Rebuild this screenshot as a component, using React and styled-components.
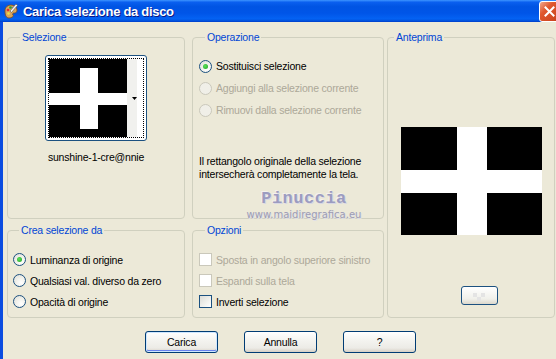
import React from 'react'
import styled, { createGlobalStyle } from 'styled-components'

const GlobalStyle = createGlobalStyle`
  html, body {
    margin: 0;
    padding: 0;
    background: #ECE9D8;
  }
  body {
    font-family: "Liberation Sans", Arial, sans-serif;
    font-size: 10.5px;
    letter-spacing: -0.2px;
    color: #000;
  }
`

const Window = styled.div`
  width: 556px;
  height: 359px;
  display: flex;
  flex-direction: column;
  overflow: hidden;
  background: #ECE9D8;
`

const TitleBar = styled.div`
  height: 22px;
  flex: none;
  display: flex;
  align-items: center;
  padding-left: 3px;
  background: linear-gradient(to bottom, #3D95FF 0%, #0A5FEF 10%, #0054E3 30%, #0055E8 60%, #0462F3 85%, #0051DC 95%, #003BC7 100%);
  overflow: hidden;
`

const TitleText = styled.span`
  flex: 1;
  margin-left: 4px;
  color: #fff;
  font-family: "Liberation Sans", Arial, sans-serif;
  font-weight: bold;
  font-size: 13px;
  letter-spacing: -0.3px;
  text-shadow: 1px 1px 0 #0A1883;
`

const CloseBtn = styled.div`
  width: 21px;
  height: 21px;
  margin-right: -4px;
  border: 1px solid #fff;
  border-radius: 3px;
  box-sizing: border-box;
  background: linear-gradient(135deg, #F0A98E 0%, #E0582E 35%, #C8401B 100%);
  display: flex;
  align-items: center;
  justify-content: center;
`

const Frame = styled.div`
  flex: 1;
  border-left: 3px solid #0B4CE0;
  padding: 9px 2px 0 4px;
  display: flex;
  flex-direction: column;
  position: relative;
`

const Grid = styled.div`
  display: grid;
  grid-template-columns: 178px 7px 192px 3px 168px;
  grid-template-rows: 188px 94px;
  row-gap: 5px;
`

const Group = styled.fieldset`
  margin: 0;
  padding: ${p => p.$pad || '0 6px'};
  border: 1px solid #D0D0BF;
  border-radius: 4px;
  min-width: 0;
  box-sizing: border-box;
  grid-column: ${p => p.$col || 'auto'};
  grid-row: ${p => p.$rows || 'auto'};
  display: flex;
  flex-direction: column;
  align-items: ${p => p.$align || 'stretch'};
`

const Legend = styled.legend`
  color: #0046D5;
  padding: 0 2px;
  margin-left: 6px;
  line-height: 13px;
`

const Thumb = styled.div`
  width: 102px;
  height: 86px;
  box-sizing: border-box;
  margin-top: 11px;
  border: 1px solid #1C5180;
  border-radius: 3px;
  background: #fff;
  padding: 2px;
  position: relative;
  display: flex;
`

const ThumbInner = styled.div`
  flex: 1;
  border: 1px dotted #000;
  display: flex;
  align-items: stretch;
`

const ThumbStrip = styled.div`
  width: 10px;
  background: #F1F1EE;
  display: flex;
  align-items: center;
  justify-content: flex-end;
`

const ThumbLabel = styled.div`
  margin-top: 10px;
  text-align: center;
`

const Option = styled.label`
  display: flex;
  align-items: center;
  gap: 4px;
  white-space: nowrap;
  height: ${p => p.$h || 22}px;
  color: ${p => (p.$disabled ? '#ACA899' : '#000')};
`

const Radio = styled.span`
  width: 13px;
  height: 13px;
  box-sizing: border-box;
  border-radius: 50%;
  border: 1px solid ${p => (p.$disabled ? '#CAC8BB' : '#1C5180')};
  background: ${p => (p.$disabled
    ? '#F0EFE8'
    : 'radial-gradient(circle at 65% 70%, #fff 0%, #F3F3EE 40%, #DCDCD4 100%)')};
  display: flex;
  align-items: center;
  justify-content: center;
  flex: none;
  &::after {
    content: '';
    display: ${p => (p.$checked ? 'block' : 'none')};
    width: 5px;
    height: 5px;
    border-radius: 50%;
    background: radial-gradient(circle at 40% 40%, #5BE25B, #21A121);
  }
`

const Check = styled.span`
  width: 13px;
  height: 13px;
  box-sizing: border-box;
  border: 1px solid ${p => (p.$disabled ? '#CAC8BB' : '#1C5180')};
  background: ${p => (p.$disabled
    ? '#fff'
    : 'linear-gradient(135deg, #DCDCD7 0%, #F2F2EE 60%, #fff 100%)')};
  flex: none;
`

const Note = styled.p`
  margin: 34px 0 0;
  line-height: 13px;
  white-space: nowrap;
`

const PreviewBox = styled.div`
  flex: 1;
  display: flex;
  flex-direction: column;
  align-items: center;
  padding-top: 83px;
`

const SmallBtn = styled.div`
  margin: 51px 0 0 16px;
  width: 37px;
  height: 19px;
  box-sizing: border-box;
  border: 1px solid #1C5180;
  border-radius: 3px;
  background: linear-gradient(to bottom, #fff, #F0F0EA 70%, #DCD8CC);
  display: flex;
  align-items: center;
  justify-content: center;
`

const ButtonRow = styled.div`
  display: flex;
  justify-content: center;
  gap: 26px;
  margin-top: 13px;
`

const Button = styled.div`
  width: 73px;
  height: 22px;
  box-sizing: border-box;
  border: 1px solid #003C74;
  border-radius: 3px;
  background: linear-gradient(to bottom, #FFFFFF 0%, #F4F4F0 40%, #ECEBE6 80%, #D6D0C5 100%);
  display: flex;
  align-items: center;
  justify-content: center;
  box-shadow: ${p => (p.$default ? 'inset 0 0 0 1px #CEE7FF, inset 0 -1px 0 1px #6982EE' : 'none')};
`

const Watermark = styled.div`
  position: absolute;
  left: 239px;
  top: 167px;
  width: 124px;
  text-align: center;
  pointer-events: none;
  letter-spacing: 0;
`

const WmName = styled.div`
  font-family: "Liberation Mono", monospace;
  font-weight: bold;
  font-size: 17px;
  letter-spacing: 0.5px;
  color: #9C9CC0;
  text-shadow: 1px 1px 0 #D8D8E4, -1px -1px 0 #F4F2EE;
`

const WmUrl = styled.div`
  font-family: "DejaVu Sans", sans-serif;
  font-size: 10px;
  color: #9C9CB4;
  margin-top: 1px;
  text-shadow: 1px 1px 0 #E0E0E8;
`

function AppIcon() {
  return (
    <svg width="16" height="16" viewBox="0 0 16 16">
      <path d="M2 8c0-4 3-6 6-6s6 2 6 5-2 3-3 3-2 1-1 2-1 3-4 3S2 12 2 8z" fill="#D9A45A" stroke="#7A4A1A" strokeWidth="0.8" />
      <circle cx="5" cy="7" r="1.3" fill="#E23030" />
      <circle cx="7.5" cy="4.5" r="1.3" fill="#30A030" />
      <circle cx="10.5" cy="5" r="1.3" fill="#2F5FE0" />
      <circle cx="5.5" cy="10.5" r="1.3" fill="#F0E040" />
      <path d="M13 1l1.5 1.5-6 7-1.5-1.5z" fill="#F3F3F3" stroke="#555" strokeWidth="0.6" />
    </svg>
  )
}

function Cross({ w, h, vx, vw, vy, vh, hy, hh }) {
  return (
    <svg width={w} height={h} viewBox={`0 0 ${w} ${h}`} style={{ display: 'block' }}>
      <rect width={w} height={h} fill="#000" />
      <rect x={vx} y={vy} width={vw} height={vh} fill="#fff" />
      <rect x="0" y={hy} width={w} height={hh} fill="#fff" />
    </svg>
  )
}

export default function App() {
  return (
    <Window>
      <GlobalStyle />
      <TitleBar>
        <AppIcon />
        <TitleText>Carica selezione da disco</TitleText>
        <CloseBtn>
          <svg width="11" height="11" viewBox="0 0 11 11">
            <path d="M1.5 1.5l8 8M9.5 1.5l-8 8" stroke="#fff" strokeWidth="2" strokeLinecap="square" />
          </svg>
        </CloseBtn>
      </TitleBar>
      <Frame>
        <Grid>
          <Group $col="1" $rows="1" $align="center">
            <Legend>Selezione</Legend>
            <Thumb>
              <ThumbInner>
                <Cross w={78} h={78} vx={31} vw={18} vy={9} vh={61} hy={34} hh={12} />
                <ThumbStrip>
                  <svg width="5" height="3" viewBox="0 0 5 3"><path d="M0 0h5L2.5 3z" fill="#000" /></svg>
                </ThumbStrip>
              </ThumbInner>
            </Thumb>
            <ThumbLabel>sunshine-1-cre@nnie</ThumbLabel>
          </Group>

          <Group $col="3" $rows="1" $pad="11px 6px 0 6px">
            <Legend>Operazione</Legend>
            <Option><Radio $checked />Sostituisci selezione</Option>
            <Option $disabled><Radio $disabled />Aggiungi alla selezione corrente</Option>
            <Option $disabled><Radio $disabled />Rimuovi dalla selezione corrente</Option>
            <Note>
              Il rettangolo originale della selezione<br />
              intersecherà completamente la tela.
            </Note>
          </Group>

          <Group $col="5" $rows="1 / span 2" $pad="0">
            <Legend>Anteprima</Legend>
            <PreviewBox>
              <Cross w={141} h={108} vx={56} vw={30} vy={0} vh={108} hy={43} hh={23} />
              <SmallBtn>
                <svg width="22" height="10" viewBox="0 0 22 10">
                  <rect x="5" y="2" width="4" height="4" fill="#E4E4E4" />
                  <rect x="13" y="2" width="4" height="4" fill="#E4E4E4" />
                  <rect x="9" y="6" width="4" height="4" fill="#E4E4E4" />
                </svg>
              </SmallBtn>
            </PreviewBox>
          </Group>

          <Group $col="1" $rows="2" $pad="12px 6px 0 5px">
            <Legend>Crea selezione da</Legend>
            <Option $h={21}><Radio $checked />Luminanza di origine</Option>
            <Option $h={21}><Radio />Qualsiasi val. diverso da zero</Option>
            <Option $h={21}><Radio />Opacità di origine</Option>
          </Group>

          <Group $col="3" $rows="2" $pad="12px 6px 0 6px">
            <Legend>Opzioni</Legend>
            <Option $h={21} $disabled><Check $disabled />Sposta in angolo superiore sinistro</Option>
            <Option $h={21} $disabled><Check $disabled />Espandi sulla tela</Option>
            <Option $h={21}><Check />Inverti selezione</Option>
          </Group>
        </Grid>

        <ButtonRow>
          <Button $default>Carica</Button>
          <Button>Annulla</Button>
          <Button>?</Button>
        </ButtonRow>

        <Watermark>
          <WmName>Pinuccia</WmName>
          <WmUrl>www.maidiregrafica.eu</WmUrl>
        </Watermark>
      </Frame>
    </Window>
  )
}
